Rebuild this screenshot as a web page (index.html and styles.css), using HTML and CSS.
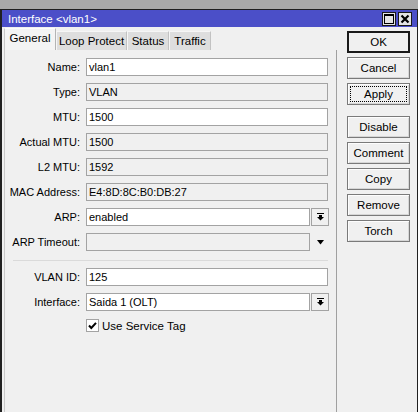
FILE: index.html
```html
<!DOCTYPE html>
<html>
<head>
<meta charset="utf-8">
<link rel="stylesheet" href="styles.css">
</head>
<body>
<div class="win">
  <div class="titlebar">
    <span class="title">Interface &lt;vlan1&gt;</span>
    <div class="tbtns">
      <span class="tb"><svg width="10" height="10" viewBox="0 0 10 10"><rect x="0.5" y="0.5" width="9" height="9" fill="none" stroke="#000"/><rect x="0" y="0" width="10" height="2" fill="#000"/></svg></span>
      <span class="tb"><svg width="10" height="10" viewBox="0 0 10 10"><path d="M1.5 1.5 L8.5 8.5 M8.5 1.5 L1.5 8.5" stroke="#000" stroke-width="2.2" fill="none"/></svg></span>
    </div>
  </div>
  <div class="body">
    <div class="main">
      <div class="tabs">
        <div class="tab active">General</div>
        <div class="tab">Loop Protect</div>
        <div class="tab">Status</div>
        <div class="tab">Traffic</div>
      </div>
      <div class="panel">
        <div class="row"><div class="lbl">Name:</div><div class="field edit">vlan1</div></div>
        <div class="row"><div class="lbl">Type:</div><div class="field ro">VLAN</div></div>
        <div class="row"><div class="lbl">MTU:</div><div class="field edit">1500</div></div>
        <div class="row"><div class="lbl">Actual MTU:</div><div class="field ro">1500</div></div>
        <div class="row"><div class="lbl">L2 MTU:</div><div class="field ro">1592</div></div>
        <div class="row"><div class="lbl">MAC Address:</div><div class="field ro">E4:8D:8C:B0:DB:27</div></div>
        <div class="row"><div class="lbl">ARP:</div><div class="field edit short">enabled</div><div class="ddbtn"><svg width="7" height="8" viewBox="0 0 7 8"><rect x="0" y="0" width="7" height="1" fill="#000"/><rect x="2" y="2" width="3" height="2" fill="#000"/><polygon points="0,4 7,4 3.5,7.5" fill="#000"/></svg></div></div>
        <div class="row"><div class="lbl">ARP Timeout:</div><div class="field ro short"></div><div class="ddplain"><svg width="7" height="5" viewBox="0 0 7 5"><polygon points="0,0 7,0 3.5,4.5" fill="#000"/></svg></div></div>
        <div class="sep"></div>
        <div class="row"><div class="lbl">VLAN ID:</div><div class="field edit">125</div></div>
        <div class="row"><div class="lbl">Interface:</div><div class="field edit short">Saida 1 (OLT)</div><div class="ddbtn"><svg width="7" height="8" viewBox="0 0 7 8"><rect x="0" y="0" width="7" height="1" fill="#000"/><rect x="2" y="2" width="3" height="2" fill="#000"/><polygon points="0,4 7,4 3.5,7.5" fill="#000"/></svg></div></div>
        <div class="chkrow"><span class="chk"><svg width="11" height="11" viewBox="0 0 11 11"><path d="M2 5.5 L4.3 8 L9 2.8" stroke="#000" stroke-width="2" fill="none"/></svg></span><span class="chklbl">Use Service Tag</span></div>
      </div>
    </div>
    <div class="side">
      <div class="btn default">OK</div>
      <div class="btn">Cancel</div>
      <div class="btn focus">Apply</div>
      <div class="btn gap">Disable</div>
      <div class="btn">Comment</div>
      <div class="btn">Copy</div>
      <div class="btn">Remove</div>
      <div class="btn">Torch</div>
    </div>
  </div>
</div>
</body>
</html>
```
FILE: styles.css
```css
html, body {
  margin: 0;
  padding: 0;
}
body {
  width: 418px;
  height: 412px;
  overflow: hidden;
  background: #a9a9a9;
  font-family: "Liberation Sans", Arial, sans-serif;
  font-size: 11px;
  color: #000;
}
.win {
  margin-top: 9px;
  height: 403px;
  box-sizing: border-box;
  border-top: 1px solid #202020;
  border-left: 2px solid #202020;
  border-right: 1px solid #202020;
  display: flex;
  flex-direction: column;
}
.titlebar {
  height: 17px;
  background: #4b4fc8;
  display: flex;
  align-items: center;
  justify-content: space-between;
  padding-left: 6px;
  padding-right: 5px;
}
.title {
  color: #fff;
  font-size: 11.5px;
}
.tbtns {
  display: flex;
  gap: 2px;
}
.tb {
  width: 14px;
  height: 14px;
  box-sizing: border-box;
  border: 1px solid #1a1a1a;
  background: #e4e4e4;
  display: flex;
  align-items: center;
  justify-content: center;
}
.body {
  flex: 1;
  background: #f0f0f0;
  display: flex;
}
.main {
  margin-left: 2px;
  width: 333px;
  display: flex;
  flex-direction: column;
}
.tabs {
  margin-top: 1px;
  height: 22px;
  display: flex;
  align-items: flex-end;
}
.tab {
  height: 19px;
  box-sizing: border-box;
  display: flex;
  align-items: center;
  justify-content: center;
  white-space: nowrap;
  background: #dedede;
  border-left: 1px solid #f6f6f6;
  border-top: 1px solid #f6f6f6;
  border-right: 1px solid #c2c2c2;
  font-size: 11.5px;
}
.tab.active {
  height: 22px;
  width: 52px;
  background: #f4f4f4;
  border-left: 1px solid #c8c8c8;
  border-top: 1px solid #fcfcfc;
  border-right: 1px solid #b4b4b4;
  padding-bottom: 3px;
}
.tab:nth-child(2) { width: 71px; }
.tab:nth-child(3) { width: 42px; }
.tab:nth-child(4) { width: 42px; }
.panel {
  flex: 1;
  border-left: 1px solid #c8c8c8;
  border-right: 1px solid #a0a0a0;
  padding-top: 8px;
  display: flex;
  flex-direction: column;
  gap: 7px;
}
.row {
  display: flex;
  height: 18px;
  align-items: center;
}
.lbl {
  width: 75px;
  text-align: right;
  margin-right: 6px;
  white-space: nowrap;
}
.field {
  width: 242px;
  height: 18px;
  box-sizing: border-box;
  border: 1px solid #a3a3a3;
  padding-left: 2px;
  line-height: 16px;
  white-space: nowrap;
}
.field.edit {
  background: #fff;
}
.field.ro {
  background: #f0f0f0;
}
.field.short {
  width: 224px;
}
.ddbtn {
  margin-left: 1px;
  width: 18px;
  height: 18px;
  box-sizing: border-box;
  border: 1px solid #a3a3a3;
  background: #f0f0f0;
  display: flex;
  align-items: center;
  justify-content: center;
}
.ddplain {
  margin-left: 1px;
  width: 18px;
  height: 18px;
  display: flex;
  align-items: center;
  justify-content: center;
}
.sep {
  margin: 2px 8px 0 8px;
  height: 1px;
  background: #dadada;
}
.chkrow {
  display: flex;
  align-items: center;
  margin-left: 81px;
  margin-top: 1px;
  height: 13px;
}
.chk {
  width: 13px;
  height: 13px;
  box-sizing: border-box;
  border: 1px solid #a3a3a3;
  background: #fff;
  display: flex;
  align-items: center;
  justify-content: center;
}
.chklbl {
  margin-left: 3px;
  font-size: 11.5px;
}
.side {
  width: 80px;
  box-sizing: border-box;
  padding: 4px 0 0 10px;
  display: flex;
  flex-direction: column;
  gap: 4px;
}
.btn {
  position: relative;
  width: 63px;
  height: 22px;
  box-sizing: border-box;
  border: 1px solid #7a7a7a;
  box-shadow: inset 1px 1px 0 #fdfdfd, inset -1px -1px 0 #d6d6d6;
  background: #f0f0f0;
  display: flex;
  align-items: center;
  justify-content: center;
  font-size: 11.5px;
}
.btn.default {
  border: 2px solid #1a1a1a;
  box-shadow: none;
}
.btn.focus::after {
  content: "";
  position: absolute;
  left: 2px;
  top: 2px;
  right: 2px;
  bottom: 2px;
  border: 1px dotted #000;
}
.btn.gap {
  margin-top: 7px;
}
```
